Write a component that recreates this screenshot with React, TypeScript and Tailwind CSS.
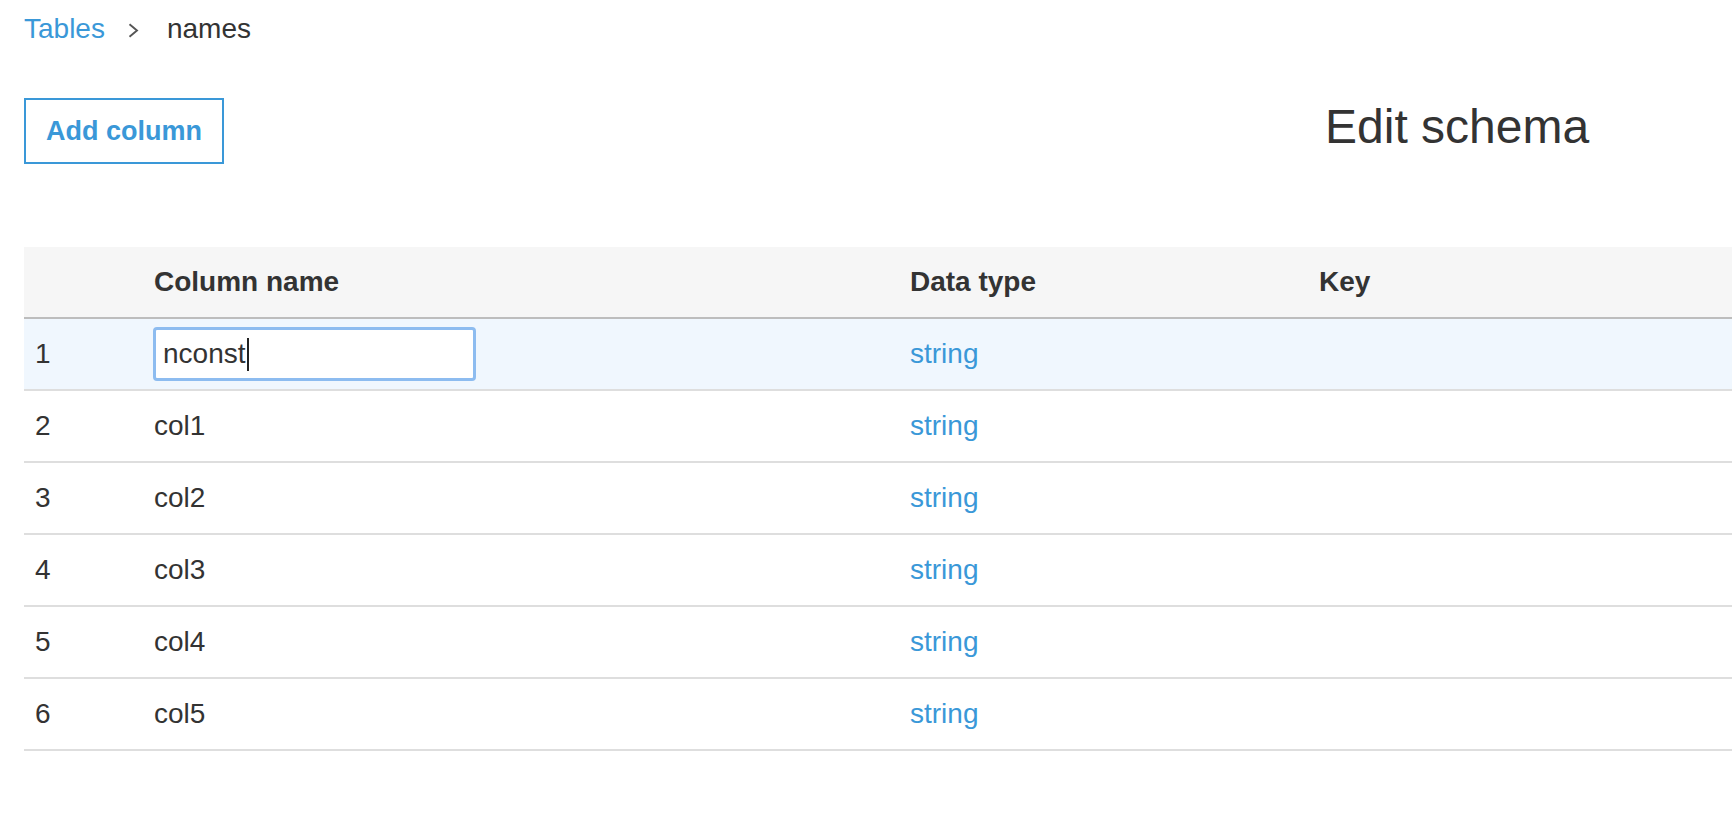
type Column = {
	id: number;
	name: string;
	type: string;
};

const columns: Column[] = [
	{ id: 1, name: "nconst", type: "string" },
	{ id: 2, name: "col1", type: "string" },
	{ id: 3, name: "col2", type: "string" },
	{ id: 4, name: "col3", type: "string" },
	{ id: 5, name: "col4", type: "string" },
	{ id: 6, name: "col5", type: "string" }
];

const gridCols = "grid grid-cols-[119px_756px_409px_1fr]";

function Chevron() {
	return (
		<svg width="11" height="15" viewBox="0 0 11 15" fill="none">
			<path d="M1.5 1.2 L9 7.5 L1.5 13.8" stroke="#555" strokeWidth="1.9" />
		</svg>
	);
}

export default function App() {
	return (
		<div className="min-h-[836px] w-full overflow-hidden bg-white pl-[24px] font-['Liberation_Sans',Arial,sans-serif] text-[#333]">
			{/* breadcrumb */}
			<div className="flex items-center pt-[13px] text-[28px] leading-[32px]">
				<span className="text-[#3a98d8]">Tables</span>
				<span className="ml-[23px] mr-[28px] flex items-center pt-[2px]">
					<Chevron />
				</span>
				<span className="text-[#333]">names</span>
			</div>

			{/* toolbar */}
			<div className="mt-[53px] flex items-start">
				<button className="border-2 border-[#3a98d8] px-[20px] py-[15px] text-[27px] font-bold leading-[32px] text-[#3a98d8]">
					Add column
				</button>
				<h1 className="ml-[1101px] mt-[1px] text-[48px] font-normal leading-[56px] text-[#333]">Edit schema</h1>
			</div>

			{/* schema table */}
			<div className="mt-[83px] w-[1708px]">
				<div className={`${gridCols} h-[72px] items-center border-b-2 border-[#bdbdbd] bg-[#f6f6f6] text-[28px] font-bold`}>
					<div className="pl-[11px]"></div>
					<div className="pl-[11px]">Column name</div>
					<div className="pl-[11px]">Data type</div>
					<div className="pl-[11px]">Key</div>
				</div>
				{columns.map((col, idx) => (
					<div
						key={col.id}
						className={`${gridCols} h-[72px] items-center border-b-2 border-[#dedede] text-[28px] ${idx === 0 ? "bg-[#f0f7fe]" : "bg-white"}`}
					>
						<div className="pl-[11px]">{col.id}</div>
						<div className="pl-[10px]">
							{idx === 0 ? (
								<div className="flex h-[54px] w-[323px] items-center rounded-[4px] border-[3px] border-[#8dbcf0] bg-white pl-[7px]">
									<span>{col.name}</span>
									<span className="ml-[1px] h-[33px] w-[2px] bg-[#222]"></span>
								</div>
							) : (
								<span className="pl-[1px]">{col.name}</span>
							)}
						</div>
						<div className="pl-[11px] text-[#3a98d8]">{col.type}</div>
						<div className="pl-[11px]"></div>
					</div>
				))}
			</div>
		</div>
	);
}
